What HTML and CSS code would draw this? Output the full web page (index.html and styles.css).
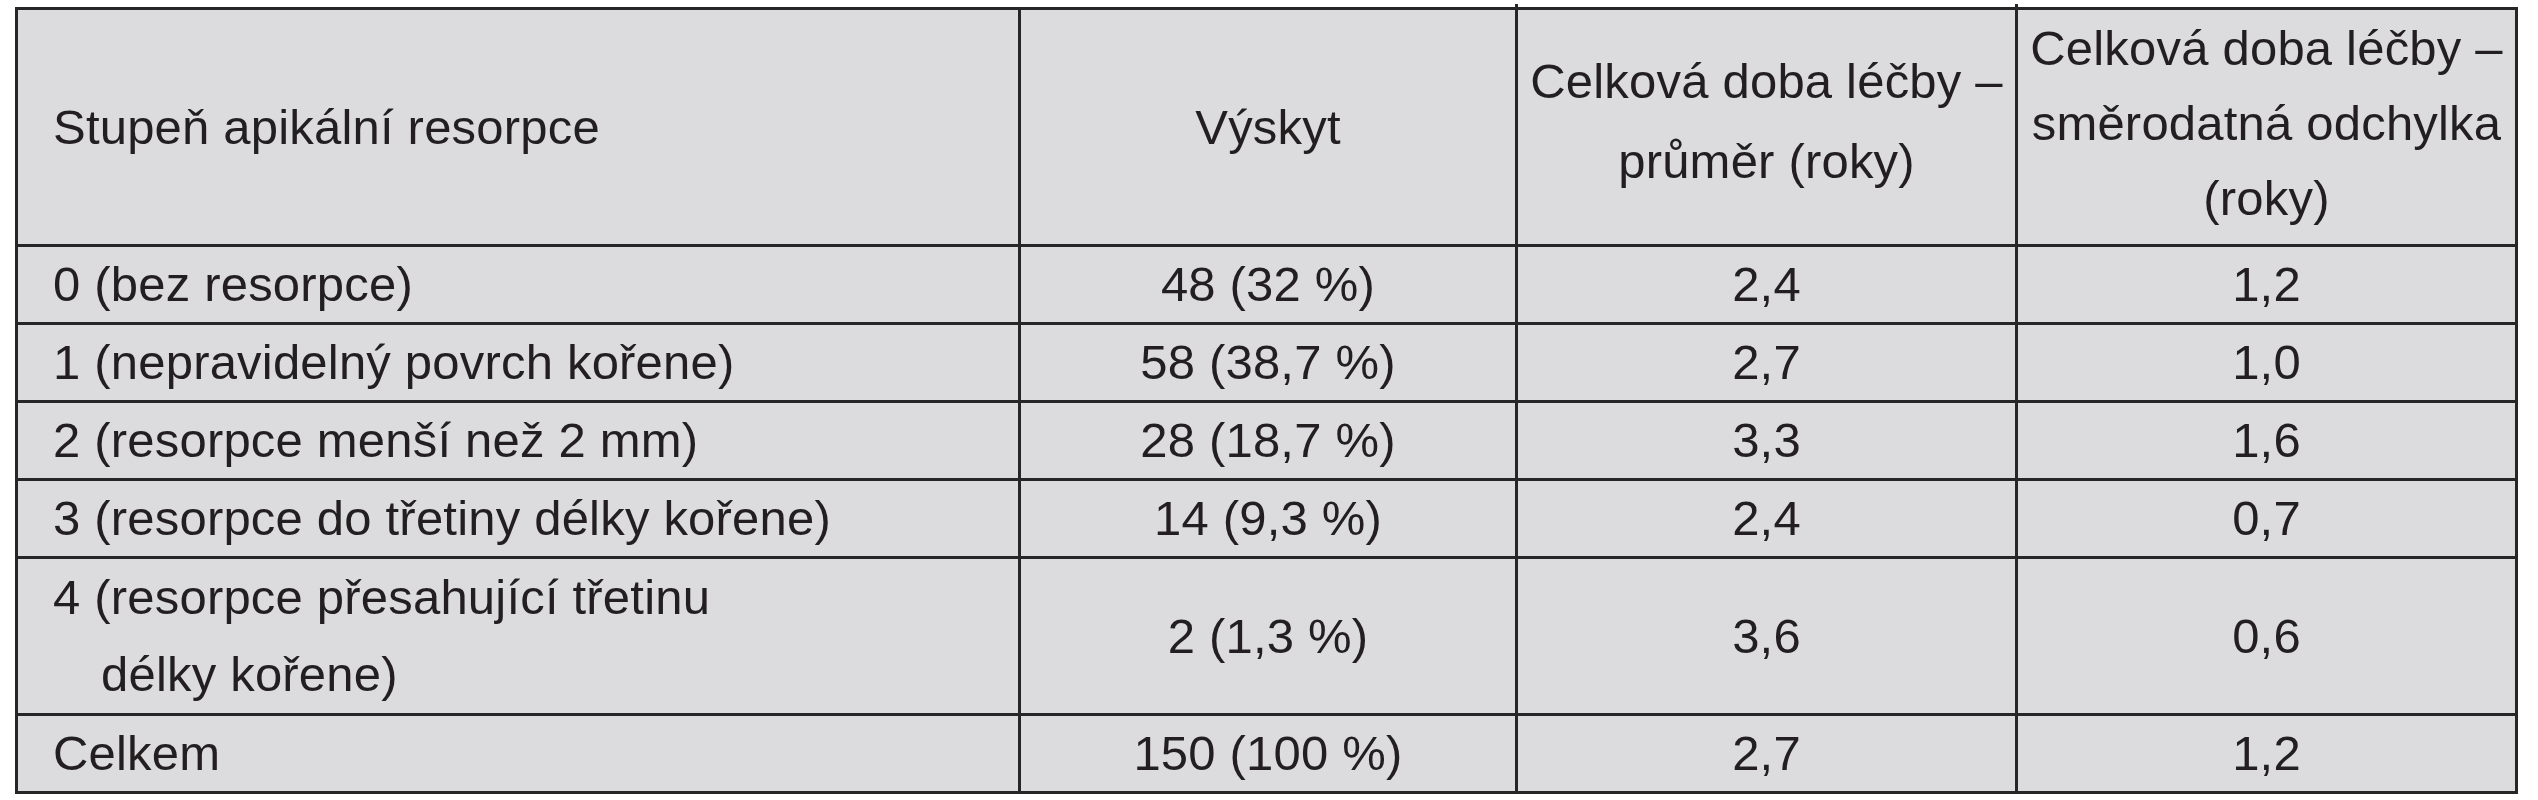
FILE: index.html
```html
<!DOCTYPE html>
<html lang="cs">
<head>
<meta charset="utf-8">
<title>Stupeň apikální resorpce</title>
<link rel="stylesheet" href="styles.css">
</head>
<body>
<table class="res-table">
  <colgroup>
    <col class="c1"><col class="c2"><col class="c3"><col class="c4">
  </colgroup>
  <thead>
    <tr class="head-row">
      <th class="left">Stupeň apikální resorpce</th>
      <th>Výskyt</th>
      <th class="two tick">Celková doba léčby –<br>průměr (roky)</th>
      <th class="three tick">Celková doba léčby –<br>směrodatná odchylka<br>(roky)</th>
    </tr>
  </thead>
  <tbody>
    <tr>
      <td class="left">0 (bez resorpce)</td>
      <td>48 (32 %)</td>
      <td>2,4</td>
      <td>1,2</td>
    </tr>
    <tr>
      <td class="left">1 (nepravidelný povrch kořene)</td>
      <td>58 (38,7 %)</td>
      <td>2,7</td>
      <td>1,0</td>
    </tr>
    <tr>
      <td class="left">2 (resorpce menší než 2 mm)</td>
      <td>28 (18,7 %)</td>
      <td>3,3</td>
      <td>1,6</td>
    </tr>
    <tr>
      <td class="left">3 (resorpce do třetiny délky kořene)</td>
      <td>14 (9,3 %)</td>
      <td>2,4</td>
      <td>0,7</td>
    </tr>
    <tr class="tall-row">
      <td class="left hang">4 (resorpce přesahující třetinu<br>délky kořene)</td>
      <td>2 (1,3 %)</td>
      <td>3,6</td>
      <td>0,6</td>
    </tr>
    <tr>
      <td class="left">Celkem</td>
      <td>150 (100 %)</td>
      <td>2,7</td>
      <td>1,2</td>
    </tr>
  </tbody>
</table>
</body>
</html>
```

FILE: styles.css
```css
html, body {
  margin: 0;
  padding: 0;
  background: #ffffff;
}

body {
  padding: 7px 0 0 15px;
  font-family: "Liberation Sans", Arial, sans-serif;
  color: #231f20;
}

.res-table {
  border-collapse: separate;
  border-spacing: 0;
  border: 3px solid #262626;
  width: 2500px;
  table-layout: fixed;
  background: #dcdcde;
  font-size: 49px;
}

.c1 { width: 1000px; }
.c2 { width: 497px; }
.c3 { width: 500px; }
.c4 { width: 500px; }

.res-table th,
.res-table td {
  padding: 0;
  font-weight: normal;
  text-align: center;
  vertical-align: middle;
  white-space: nowrap;
  line-height: 75px;
  letter-spacing: 0.2px;
  border-left: 3px solid #262626;
  border-top: 3px solid #262626;
}

.res-table th:first-child,
.res-table td:first-child {
  border-left: none;
}

.res-table thead th {
  border-top: none;
  height: 222px;
  line-height: 74px;
}

.res-table thead th.two {
  line-height: 80px;
  padding-bottom: 12px;
}

.res-table thead th.three {
  line-height: 75px;
  padding-bottom: 8px;
}

.res-table th.tick {
  position: relative;
}

/* small stub of the column rule poking above the top border */
.res-table th.tick::before {
  content: "";
  position: absolute;
  left: -3px;
  top: -6px;
  width: 3px;
  height: 4px;
  background: #262626;
}

.res-table .left {
  text-align: left;
  padding-left: 35px;
}

.res-table td.hang {
  line-height: 77px;
  padding-left: 83px;
  text-indent: -48px;
}
```
